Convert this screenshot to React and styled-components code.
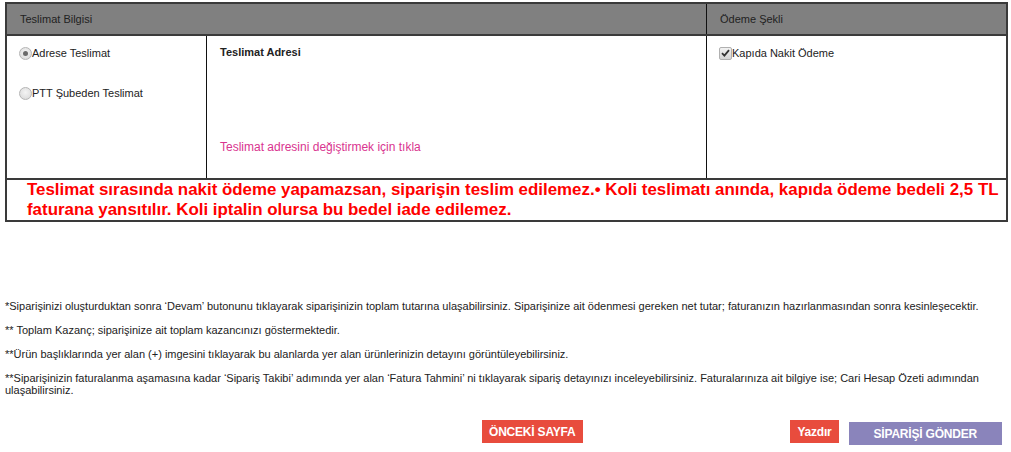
import React from "react";
import styled, { createGlobalStyle } from "styled-components";

const Global = createGlobalStyle`
  html, body { margin: 0; padding: 0; background: #fff; }
  body { font-family: "Liberation Sans", Arial, sans-serif; color: #222; }
`;

const Page = styled.div`
  padding: 2px 3px 0 5px;
  width: 1003px;
`;

const Table = styled.div`
  border: 2px solid #3a3a3a;
  display: grid;
  grid-template-columns: 199px 1px 499px 1px 1fr;
`;

const HeadCell = styled.div`
  grid-column: ${(p) => p.$span};
  background: #808080;
  height: 30px;
  border-bottom: 2px solid #3a3a3a;
  display: flex;
  align-items: center;
  padding-left: 13px;
  font-size: 11px;
  color: #222;
`;

const VLine = styled.div`
  background: #111;
  grid-column: ${(p) => p.$col};
`;

const HeadLine = styled(VLine)`
  height: 30px;
  border-bottom: 2px solid #3a3a3a;
  background: linear-gradient(#111, #111) no-repeat top/1px 30px, #3a3a3a;
`;

const BodyCell = styled.div`
  height: 142px;
  padding: 10px 12px 0 12px;
  font-size: 11px;
  color: #222;
  display: flex;
  flex-direction: column;
  box-sizing: border-box;
`;

const Option = styled.label`
  display: flex;
  align-items: center;
  height: 14px;
  margin-top: ${(p) => p.$mt || 0}px;
  font-size: 11px;
  color: #222;
`;

const Radio = styled.span`
  width: 11px;
  height: 11px;
  border-radius: 50%;
  border: 1px solid #b5b5b5;
  background: radial-gradient(circle at 50% 40%, #f4f4f4, #d6d6d6);
  position: relative;
  flex: none;
  &::after {
    content: "";
    display: ${(p) => (p.$checked ? "block" : "none")};
    position: absolute;
    left: 3px;
    top: 3px;
    width: 5px;
    height: 5px;
    border-radius: 50%;
    background: #6a6a6a;
  }
`;

const Check = styled.span`
  width: 11px;
  height: 11px;
  border: 1px solid #b0b0b0;
  border-radius: 2px;
  background: linear-gradient(#f2f2f2, #d4d4d4);
  flex: none;
  display: flex;
  align-items: center;
  justify-content: center;
`;

const AddressTitle = styled.div`
  font-weight: bold;
  font-size: 11px;
  color: #222;
  margin-left: 1px;
`;

const ChangeLink = styled.a`
  margin-top: auto;
  margin-bottom: 24px;
  margin-left: 1px;
  color: #d9348f;
  font-size: 12px;
  text-decoration: none;
  cursor: pointer;
`;

const Warning = styled.div`
  grid-column: 1 / -1;
  border-top: 2px solid #3a3a3a;
  padding: 0 0 0 20px;
  color: #ff0000;
  font-weight: bold;
  font-size: 16.9px;
  line-height: 20px;
`;

const Notes = styled.div`
  margin-top: 78px;
  font-size: 11px;
  line-height: 12px;
  color: #222;
  padding-right: 20px;
`;

const Note = styled.p`
  margin: 0 0 12px 0;
`;

const Buttons = styled.div`
  display: flex;
  align-items: flex-start;
  margin-top: 24px;
  padding-left: 477px;
  padding-right: 6px;
`;

const Btn = styled.button`
  border: none;
  color: #fff;
  font-family: "Liberation Sans", Arial, sans-serif;
  font-weight: bold;
  font-size: 12px;
  letter-spacing: -0.2px;
  height: 23px;
  padding: 0 ${(p) => p.$px}px;
  margin-top: ${(p) => p.$mt || 0}px;
  background: ${(p) => p.$bg};
  cursor: pointer;
`;

const Spacer = styled.div`
  flex: 1;
`;

export default function App() {
  return (
    <Page>
      <Global />
      <Table>
        <HeadCell $span="1 / 4">Teslimat Bilgisi</HeadCell>
        <HeadLine $col="4" />
        <HeadCell $span="5">Ödeme Şekli</HeadCell>

        <BodyCell>
          <Option>
            <Radio $checked />
            Adrese Teslimat
          </Option>
          <Option $mt={26}>
            <Radio />
            PTT Şubeden Teslimat
          </Option>
        </BodyCell>
        <VLine $col="2" />
        <BodyCell>
          <AddressTitle>Teslimat Adresi</AddressTitle>
          <ChangeLink>Teslimat adresini değiştirmek için tıkla</ChangeLink>
        </BodyCell>
        <VLine $col="4" />
        <BodyCell>
          <Option>
            <Check>
              <svg width="9" height="8" viewBox="0 0 9 8">
                <path d="M1 4.2 L3.4 6.6 L8 1.2" fill="none" stroke="#333" strokeWidth="1.8" />
              </svg>
            </Check>
            Kapıda Nakit Ödeme
          </Option>
        </BodyCell>

        <Warning>
          Teslimat sırasında nakit ödeme yapamazsan, siparişin teslim edilemez.• Koli teslimatı anında, kapıda ödeme bedeli 2,5 TL faturana yansıtılır. Koli iptalin olursa bu bedel iade edilemez.
        </Warning>
      </Table>

      <Notes>
        <Note>*Siparişinizi oluşturduktan sonra ‘Devam’ butonunu tıklayarak siparişinizin toplam tutarına ulaşabilirsiniz. Siparişinize ait ödenmesi gereken net tutar; faturanızın hazırlanmasından sonra kesinleşecektir.</Note>
        <Note>** Toplam Kazanç; siparişinize ait toplam kazancınızı göstermektedir.</Note>
        <Note>**Ürün başlıklarında yer alan (+) imgesini tıklayarak bu alanlarda yer alan ürünlerinizin detayını görüntüleyebilirsiniz.</Note>
        <Note>**Siparişinizin faturalanma aşamasına kadar ‘Sipariş Takibi’ adımında yer alan ‘Fatura Tahmini’ ni tıklayarak sipariş detayınızı inceleyebilirsiniz. Faturalarınıza ait bilgiye ise; Cari Hesap Özeti adımından ulaşabilirsiniz.</Note>
      </Notes>

      <Buttons>
        <Btn $bg="#e84c3d" $px={7}>ÖNCEKİ SAYFA</Btn>
        <Spacer />
        <Btn $bg="#e84c3d" $px={7}>Yazdır</Btn>
        <Btn $bg="#8a84bb" $px={25} $mt={2} style={{ marginLeft: 10 }}>SİPARİŞİ GÖNDER</Btn>
      </Buttons>
    </Page>
  );
}
